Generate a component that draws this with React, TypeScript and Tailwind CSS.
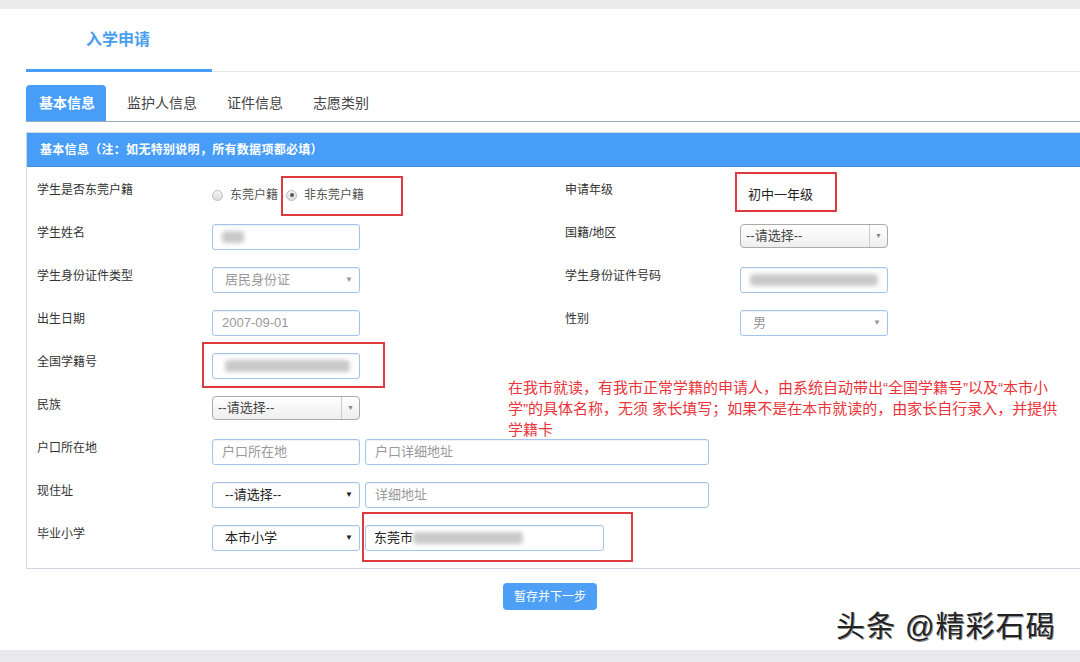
import type { ReactNode } from 'react';

const blue = 'bg-[#479df7]';
const inputClass =
  'h-[26px] border border-[#a3c4e8] rounded-[3px] bg-white flex items-center px-[9px] text-[13px] shadow-[inset_0_1px_1px_rgba(0,0,0,0.06)]';

function Label({ children }: { children: ReactNode }) {
  return <div className="pt-[1px] text-[12px] leading-[16px] text-[#333]">{children}</div>;
}

function Blur({ w }: { w: number }) {
  return <div className="h-[12px] bg-[#c9c9c9] blur-[2px] rounded-sm" style={{ width: w }} />;
}

function Select2({ text }: { text: string }) {
  return (
    <div className="h-[24px] w-[148px] flex border border-[#aaa] rounded-[4px] bg-gradient-to-b from-white to-[#eee] text-[13px] text-[#444]">
      <div className="flex-1 flex items-center pl-[5px]">{text}</div>
      <div className="w-[18px] flex items-center justify-center border-l border-[#ccc] text-[7px] text-[#888]">▼</div>
    </div>
  );
}

function NativeSelect({ text, dim }: { text: string; dim?: boolean }) {
  return (
    <div className={`${inputClass} w-[148px] justify-between pl-[12px] pr-[6px]`}>
      <span className={dim ? 'text-[#999]' : 'text-[#222]'}>{text}</span>
      <span className={dim ? 'text-[8px] text-[#999]' : 'text-[8px] text-[#222]'}>▼</span>
    </div>
  );
}

function Radio({ checked, label }: { checked?: boolean; label: string }) {
  return (
    <div className="flex items-center mr-[8px]">
      <span className="w-[11px] h-[11px] rounded-full border border-[#bbb] bg-gradient-to-b from-[#f4f4f4] to-[#ddd] flex items-center justify-center">
        {checked && <span className="w-[4px] h-[4px] rounded-full bg-[#555]" />}
      </span>
      <span className="ml-[7px] text-[12px] text-[#555]">{label}</span>
    </div>
  );
}

function Row({ label, left, rlabel, right }: { label: string; left: ReactNode; rlabel?: string; right?: ReactNode }) {
  return (
    <div className="flex h-[26px]">
      <div className="w-[185px] pl-[10px]">
        <Label>{label}</Label>
      </div>
      <div className="w-[353px] flex items-start">{left}</div>
      {rlabel && (
        <div className="w-[175px]">
          <Label>{rlabel}</Label>
        </div>
      )}
      {right && <div className="flex items-start">{right}</div>}
    </div>
  );
}

const redBox = 'absolute border-2 border-[#dc3a3f]';

export default function App() {
  return (
    <div className="relative w-[1080px] h-[662px] overflow-hidden bg-white flex flex-col font-['Liberation_Sans','Noto_Sans_CJK_SC',sans-serif]">
      <div className="h-[9px] bg-[#ebebeb]" />

      {/* Title */}
      <div className="h-[60px] flex items-center pl-[86px] pt-[2px] text-[16px] font-bold text-[#4a9ef0]">入学申请</div>
      <div className="ml-[26px] flex items-end h-[3px]">
        <div className={`w-[186px] h-[3px] ${blue}`} />
        <div className="flex-1 h-px bg-[#e6e6e6]" />
      </div>

      {/* Tabs */}
      <div className="mt-[13px] ml-[26px] flex h-[37px] border-b border-[#98aabb]">
        <div className={`w-[80px] ${blue} rounded-t-[4px] flex items-center justify-center pl-[2px] text-[14px] font-bold text-white mr-[6px]`}>基本信息</div>
        {['监护人信息', '证件信息', '志愿类别'].map((t) => (
          <div key={t} className="px-[15px] flex items-center text-[14px] text-[#444]">
            {t}
          </div>
        ))}
      </div>

      {/* Panel */}
      <div className="mt-[10px] ml-[26px] w-[1070px] border border-[#cfd8e2]">
        <div className={`h-[34px] ${blue} border-b border-[#3d8ee6] flex items-center pl-[13px] text-[12px] font-bold text-white tracking-[0.3px]`}>
          基本信息（注：如无特别说明，所有数据项都必填）
        </div>
        <div className="pt-[14px] pb-[17px] flex flex-col gap-[17px]">
          <Row
            label="学生是否东莞户籍"
            left={
              <div className="h-[26px] flex items-center pt-[2px]">
                <Radio label="东莞户籍" />
                <Radio checked label="非东莞户籍" />
              </div>
            }
            rlabel="申请年级"
            right={<div className="h-[26px] flex items-center pl-[8px] pt-[2px] text-[13px] text-[#222]">初中一年级</div>}
          />
          <Row
            label="学生姓名"
            left={
              <div className={`${inputClass} w-[148px]`}>
                <Blur w={22} />
              </div>
            }
            rlabel="国籍/地区"
            right={<Select2 text="--请选择--" />}
          />
          <Row
            label="学生身份证件类型"
            left={<NativeSelect text="居民身份证" dim />}
            rlabel="学生身份证件号码"
            right={
              <div className={`${inputClass} w-[148px]`}>
                <Blur w={130} />
              </div>
            }
          />
          <Row
            label="出生日期"
            left={<div className={`${inputClass} w-[148px] text-[#999]`}>2007-09-01</div>}
            rlabel="性别"
            right={<NativeSelect text="男" dim />}
          />
          <Row
            label="全国学籍号"
            left={
              <div className={`${inputClass} w-[148px] pl-[12px]`}>
                <Blur w={128} />
              </div>
            }
          />
          <Row label="民族" left={<Select2 text="--请选择--" />} />
          <Row
            label="户口所在地"
            left={
              <div className="flex gap-[5px]">
                <div className={`${inputClass} w-[148px] text-[#999]`}>户口所在地</div>
                <div className={`${inputClass} w-[344px] text-[#999]`}>户口详细地址</div>
              </div>
            }
          />
          <Row
            label="现住址"
            left={
              <div className="flex gap-[5px]">
                <NativeSelect text="--请选择--" />
                <div className={`${inputClass} w-[344px] text-[#999]`}>详细地址</div>
              </div>
            }
          />
          <Row
            label="毕业小学"
            left={
              <div className="flex gap-[5px]">
                <NativeSelect text="本市小学" />
                <div className={`${inputClass} w-[239px] pl-[8px] text-[#222]`}>
                  东莞市
                  <Blur w={110} />
                </div>
              </div>
            }
          />
        </div>
      </div>

      <div className="mt-[14px] ml-[503px] w-[94px] h-[27px] rounded-[4px] bg-[#4da0f5] flex items-center justify-center text-[12px] text-white">
        暂存并下一步
      </div>

      <div className="flex-1" />
      <div className="h-[12px] bg-[#e9e9ed]" />

      {/* annotation overlays */}
      <div className={`${redBox} left-[281px] top-[176px] w-[122px] h-[40px]`} />
      <div className={`${redBox} left-[735px] top-[172px] w-[102px] h-[40px]`} />
      <div className={`${redBox} left-[202px] top-[342px] w-[183px] h-[46px]`} />
      <div className={`${redBox} left-[362px] top-[512px] w-[271px] h-[50px]`} />
      <div className="absolute left-[508px] top-[377px] text-[15px] leading-[21px] text-[#e8343a]">
        在我市就读，有我市正常学籍的申请人，由系统自动带出“全国学籍号”以及“本市小
        <br />
        学”的具体名称，无须 家长填写；如果不是在本市就读的，由家长自行录入，并提供
        <br />
        学籍卡
      </div>
      <div className="absolute left-[836px] top-[608px] text-[29px] leading-[38px] tracking-[1px] text-[#222] [text-shadow:-1px_0_0_#fff,1px_1px_0_#888]">
        头条 @精彩石碣
      </div>
    </div>
  );
}
